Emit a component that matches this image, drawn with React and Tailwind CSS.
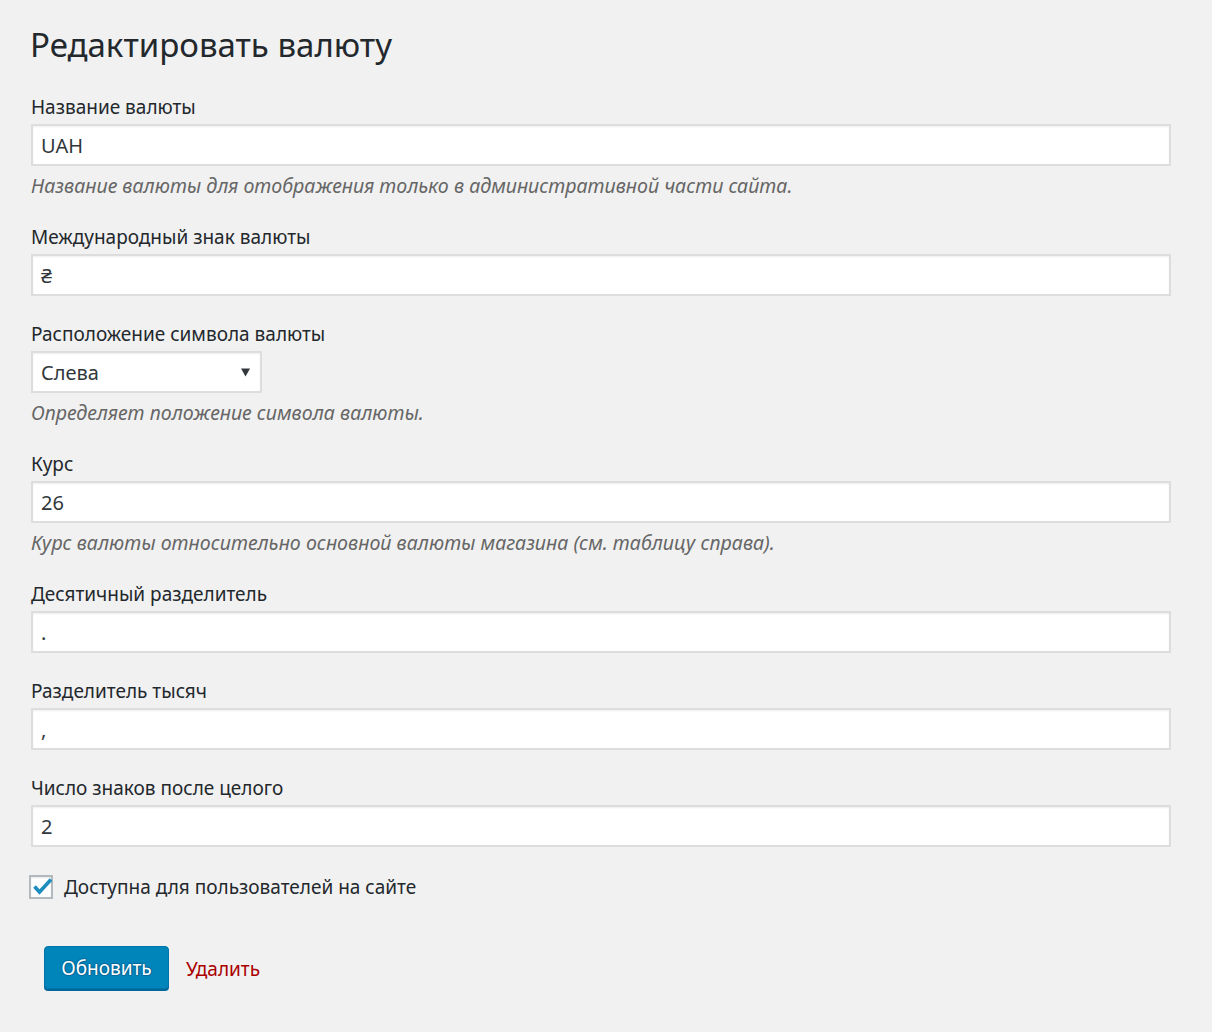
import React from 'react';

const font = { fontFamily: '"Noto Sans", "Open Sans", sans-serif' };

function Field({ label, value, desc, last }) {
  return (
    <div className={last ? '' : 'mb-[25px]'}>
      <div className="h-[26px] leading-[26px] text-[19px] text-[#23282d]">{label}</div>
      <div className="mt-[4px] h-[42px] w-[1140px] border-2 border-[#dddddd] bg-white shadow-[inset_0_1px_2px_rgba(0,0,0,0.07)] px-[8px] flex items-center text-[20px] text-[#32373c]">
        <span className="translate-y-[1px]">{value}</span>
      </div>
      {desc && (
        <div className="mt-[7px] h-[26px] leading-[26px] text-[19.6px] italic text-[#666666]">{desc}</div>
      )}
    </div>
  );
}

export default function App() {
  return (
    <div className="min-h-[1032px] w-[1212px] bg-[#f1f1f1] px-[31px] pt-[22px]" style={font}>
      <h1 className="h-[46px] leading-[46px] text-[33px] text-[#23282d] -ml-[1px]">Редактировать валюту</h1>
      <div className="mt-[26px]">
        <Field
          label="Название валюты"
          value="UAH"
          desc="Название валюты для отображения только в административной части сайта."
        />
        <Field label="Международный знак валюты" value="₴" />

        <div className="mb-[25px]">
          <div className="h-[26px] leading-[26px] text-[19px] text-[#23282d]">Расположение символа валюты</div>
          <div className="mt-[4px] h-[42px] w-[231px] border-2 border-[#dddddd] bg-white shadow-[inset_0_1px_2px_rgba(0,0,0,0.07)] pl-[8px] pr-[10px] flex items-center justify-between text-[20px] text-[#32373c]">
            <span className="translate-y-[1px]">Слева</span>
            <svg width="9" height="10" viewBox="0 0 10 10">
              <path d="M0 1 L10 1 L5 10 Z" fill="#32373c" />
            </svg>
          </div>
          <div className="mt-[7px] h-[26px] leading-[26px] text-[19.6px] italic text-[#666666]">Определяет положение символа валюты.</div>
        </div>

        <Field
          label="Курс"
          value="26"
          desc="Курс валюты относительно основной валюты магазина (см. таблицу справа)."
        />
        <Field label="Десятичный разделитель" value="." />
        <Field label="Разделитель тысяч" value="," />
        <Field label="Число знаков после целого" value="2" last />

        <div className="mt-[26px] flex items-center">
          <div className="relative h-[24px] w-[24px] -ml-[2px] border-2 border-[#b4b9be] bg-white shadow-[inset_0_1px_2px_rgba(0,0,0,0.1)]">
            <svg className="absolute -left-[2px] -top-[2px] overflow-visible" width="24" height="24" viewBox="0 0 24 24">
              <path d="M5.5 11.5 L10.5 17 L22 4.5" fill="none" stroke="#1e8cbe" strokeWidth="3.6" strokeLinejoin="miter" />
            </svg>
          </div>
          <span className="ml-[11px] text-[19px] text-[#23282d]">Доступна для пользователей на сайте</span>
        </div>

        <div className="mt-[44px] ml-[13px] flex items-center">
          <button className="h-[43px] w-[125px] rounded-[4px] border border-[#0073aa] bg-[#0085ba] pt-[3px] text-[19px] text-white shadow-[0_2px_0_#006799] [text-shadow:0_-1px_1px_#006799,1px_0_1px_#006799,0_1px_1px_#006799,-1px_0_1px_#006799]">
            Обновить
          </button>
          <a className="ml-[17px] translate-y-[2px] text-[19px] text-[#aa0000]">Удалить</a>
        </div>
      </div>
    </div>
  );
}
